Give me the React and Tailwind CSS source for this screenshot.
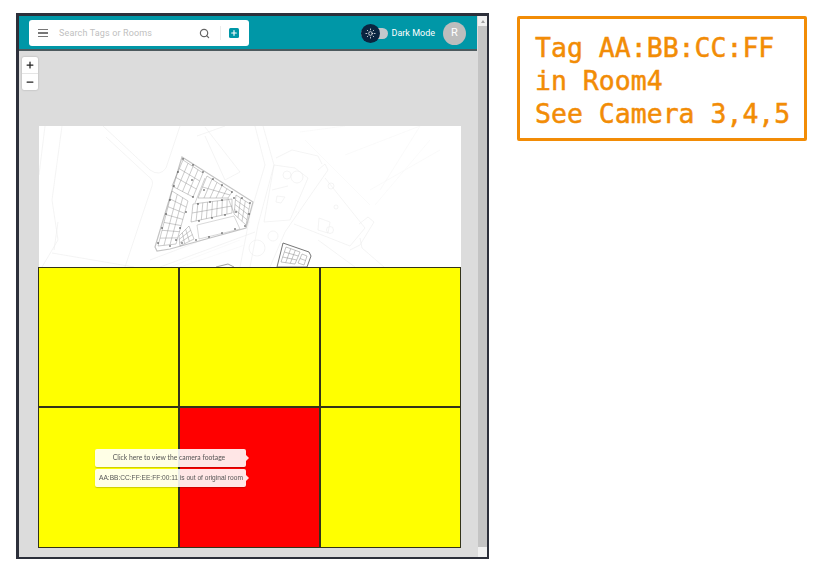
import React from "react";
import { Search, Sun, Plus, Minus } from "lucide-react";

const lerp = (a, b, t) => [a[0] + (b[0] - a[0]) * t, a[1] + (b[1] - a[1]) * t];
const quadLines = (p00, p10, p11, p01, nu, nv) => {
  let d = "";
  const seg = (a, b) => { d += `M${a[0].toFixed(1)} ${a[1].toFixed(1)}L${b[0].toFixed(1)} ${b[1].toFixed(1)}`; };
  seg(p00, p10); seg(p10, p11); seg(p11, p01); seg(p01, p00);
  for (let i = 1; i < nu; i++) seg(lerp(p00, p10, i / nu), lerp(p01, p11, i / nu));
  for (let j = 1; j < nv; j++) seg(lerp(p00, p01, j / nv), lerp(p10, p11, j / nv));
  return d;
};

const zones = [
  [[183, 160], [203, 173], [193, 197], [172, 186], 4, 3],
  [[207, 176], [232, 192], [228, 198], [198, 198], 5, 2],
  [[236, 195], [250, 204], [246, 225], [234, 214], 3, 4],
  [[172, 191], [188, 201], [176, 244], [158, 246], 3, 7],
  [[193, 204], [232, 199], [232, 213], [191, 222], 8, 2],
  [[189, 226], [194, 239], [180, 246], [179, 236], 3, 3],
];

const dots = [[183,159],[193,165],[203,172],[213,179],[222,185],[232,192],[242,198],[250,203],[178,172],[174,186],[170,200],[166,214],[162,228],[158,243],[170,246],[182,243],[196,240],[209,237],[222,233],[235,229],[245,226],[249,214],[193,197],[186,212],[180,228],[198,204],[210,202],[222,200],[234,198],[199,221],[212,218],[225,215],[236,212],[192,180],[204,190],[176,240]];

const MapDrawing = () => (
  <svg viewBox="39 126 422 141" className="block w-full h-full blur-[0.35px]" fill="none">
    <g stroke="#ececec" strokeWidth="0.6">
      <path d="M45 126 L39 175 M62 126 L52 200 L58 240 L42 267" />
      <path d="M103 126 L150 170 Q160 177 166 168 L180 126" />
      <path d="M106 137 L148 176 Q154 180 152 186 L125 267" />
      <path d="M52 253 L134 267 M58 222 L54 250" />
      <path d="M197 136 L225 126 M205 127 L240 172 L225 180 L205 136" />
      <path d="M160 267 L255 232 M150 260 L250 222" />
      <path d="M255 126 L265 165 L250 215 L240 267 M263 126 L274 165 L258 225 L250 267" />
      <path d="M276 158 L292 150 L318 156 L322 164 M274 165 L295 168 L308 178 L290 220 L264 222 Z" />
      <path d="M272 190 L288 186 M277 196 L285 197 L281 203 L276 202 Z" />
      <path d="M318 170 L325 164 L328 170 L285 232 L270 267" />
      <path d="M325 178 L365 228 L350 246 L294 224" />
      <path d="M359 224 L368 217 L374 222 L360 245 L350 250" />
      <path d="M360 238 L362 248 L384 267" />
      <path d="M318 240 L355 267" />
      <circle cx="331" cy="186" r="3" />
      <circle cx="336" cy="207" r="2" />
      <path d="M319 218 L330 222 L328 233 L318 230 Z" />
      <circle cx="330" cy="230" r="3.5" />
      <circle cx="257" cy="248" r="8" />
      <circle cx="273" cy="236" r="5" />
      <circle cx="287" cy="175" r="4" />
      <circle cx="297" cy="177" r="6" />
    </g>
    <g stroke="#f6f6f6" strokeWidth="0.6">
      <path d="M300 132 L345 126 M305 140 L370 205 M345 155 L420 126 M375 205 L430 140 M370 190 L440 150 M420 126 L380 190" />
      <path d="M170 267 L240 240 M180 267 L245 245" />
    </g>
    <path d="M182 157 L253 202 L246 228 L170 249 L157 251 L155 247 Z" stroke="#c4c4c4" strokeWidth="1.2" fill="#fff" />
    <g stroke="#8c8c8c" strokeWidth="0.45">
      {zones.map(([a, b, c, e, nu, nv], i) => <path key={i} d={quadLines(a, b, c, e, nu, nv)} />)}
      <path d="M197 225 L234 216 L240 229 L199 239 Z" stroke="#aaa" />
      <path d="M205 178 L195 203 M228 198 L234 213" stroke="#999" />
    </g>
    <g fill="#222">
      {dots.map(([x, y], i) => <circle key={i} cx={x} cy={y} r="0.75" />)}
    </g>
    <path d="M283 243 L309 252 L311 256 L307 267 L277 267 Z" stroke="#666" strokeWidth="0.9" fill="#fff" />
    <g stroke="#888" strokeWidth="0.5">
      <path d={quadLines([286, 247], [300, 252], [295, 264], [281, 262], 3, 3)} />
      <path d={quadLines([302, 254], [307, 256], [304, 265], [298, 263], 1, 2)} />
    </g>
    <path d="M216 267 L228 264 L234 267" stroke="#888" strokeWidth="0.8" />
  </svg>
);

const Bubble = ({ children, center }) => (
  <div className={`relative w-[151px] h-[18px] rounded-[2px] bg-white/90 shadow-[0_1px_1px_rgba(0,0,0,0.2)] leading-[17px] text-[#555] whitespace-nowrap ${center ? "text-center pr-[3px] text-[6.8px] font-['Lato',sans-serif]" : "pl-[4px] text-[6.6px] font-['Liberation_Sans',sans-serif]"}`}>
    <span className="blur-[0.25px] inline-block">{children}</span>
    <span className="absolute right-[-3px] top-[6px] w-0 h-0 border-y-[3px] border-y-transparent border-l-[3px] border-l-white/90" />
  </div>
);

export default function App() {
  return (
    <div className="w-[818px] h-[570px] bg-white relative overflow-hidden pt-[13px] pl-[16px] flex items-start gap-[28px]">
      <div className="w-[473px] h-[546px] border-[3px] border-r-[2px] border-b-[2px] border-[#2c2f3a] flex bg-[#dcdcdc] shrink-0">
        <div className="flex-1 flex flex-col min-w-0">
          <header className="h-[35px] shrink-0 bg-[#0097a7] border-b-[2px] border-[#4d5a5e] flex items-center pt-[1px] pl-[10px] pr-[11px]">
            <div className="w-[220px] h-[26px] bg-white rounded-[3px] flex items-center pl-[9px] pr-[10px]">
              <span className="w-[10px] flex flex-col gap-[2px]">
                <span className="h-[1.5px] bg-[#777]" />
                <span className="h-[1.5px] bg-[#777]" />
                <span className="h-[1.5px] bg-[#777]" />
              </span>
              <span className="ml-[11px] pt-[1px] flex-1 text-[9px] tracking-[0.15px] text-[#c0c0c0] font-['Roboto',sans-serif]">Search Tags or Rooms</span>
              <Search size={11} strokeWidth={2.6} className="text-[#666] mr-[1px]" />
              <span className="w-px h-[14px] bg-[#ececec] ml-[9px] mr-[8px]" />
              <span className="w-[10px] h-[10px] rounded-[1.5px] bg-[#0097a7] flex items-center justify-center">
                <Plus size={8} strokeWidth={3.4} className="text-white" />
              </span>
            </div>
            <div className="ml-auto flex items-center">
              <div className="relative w-[27px] h-[11px] mr-[4px] rounded-full bg-[#c3c8cc]">
                <span className="absolute left-0 top-[-4px] w-[19px] h-[19px] rounded-full bg-[#0a2540] flex items-center justify-center">
                  <Sun size={11} strokeWidth={1.6} className="text-white" />
                </span>
              </div>
              <span className="pt-[1px] text-[9px] text-white font-['Roboto',sans-serif] whitespace-nowrap">Dark Mode</span>
              <span className="ml-[8px] w-[23px] h-[23px] rounded-full bg-[#bdbdbd] text-white text-[11px] flex items-center justify-center font-['Roboto',sans-serif]">R</span>
            </div>
          </header>
          <main className="relative flex-1 pl-[19px] pt-[75px] flex flex-col">
            <div className="absolute left-[3px] top-[6px] w-[16px] rounded-[2px] bg-white shadow-[0_0_2px_rgba(0,0,0,0.25)] flex flex-col text-[#222]">
              <span className="h-[17px] flex items-center justify-center border-b border-[#e5e5e5]"><Plus size={10} strokeWidth={3} /></span>
              <span className="h-[16px] flex items-center justify-center"><Minus size={10} strokeWidth={3} /></span>
            </div>
            <div className="h-[141px] w-[422px] ml-[1px] bg-white shrink-0">
              <MapDrawing />
            </div>
            <div className="relative w-[423px] h-[281px] shrink-0 grid grid-cols-[141px_141px_1fr] grid-rows-[140px_1fr] border border-[#33331a] bg-[#ffff00]">
              <div className="border-r-2 border-b-2 border-[#33331a]" />
              <div className="border-r-2 border-b-2 border-[#33331a]" />
              <div className="border-b-2 border-[#33331a]" />
              <div className="border-r-2 border-[#33331a]" />
              <div className="border-r-2 border-[#33331a] bg-[#ff0000]" />
              <div />
              <div className="absolute left-[56px] top-[181px] flex flex-col gap-[2px]">
                <Bubble center>Click here to view the camera footage</Bubble>
                <Bubble>AA:BB:CC:FF:EE:FF:00:11 is out of original room</Bubble>
              </div>
            </div>
          </main>
        </div>
        <div className="w-[9px] ml-[1px] shrink-0 bg-[#c4c4c4] flex flex-col justify-between">
          <div className="h-[10px] bg-[#f1f1f1] flex items-center justify-center">
            <span className="w-0 h-0 border-x-[2.5px] border-x-transparent border-b-[3px] border-b-[#a0a0a0]" />
          </div>
          <div className="h-[10px] bg-[#f1f1f1]" />
        </div>
      </div>
      <div className="mt-[3px] w-[290px] h-[125px] border-[3px] border-[#f28c06] rounded-[2px] pl-[15px] pt-[12px] font-['DejaVu_Sans_Mono',monospace] text-[26.5px] leading-[33px] text-[#f28c06] [-webkit-text-stroke:0.5px_#f28c06] shrink-0">
        <div>Tag AA:BB:CC:FF</div>
        <div>in Room4</div>
        <div>See Camera 3,4,5</div>
      </div>
    </div>
  );
}
